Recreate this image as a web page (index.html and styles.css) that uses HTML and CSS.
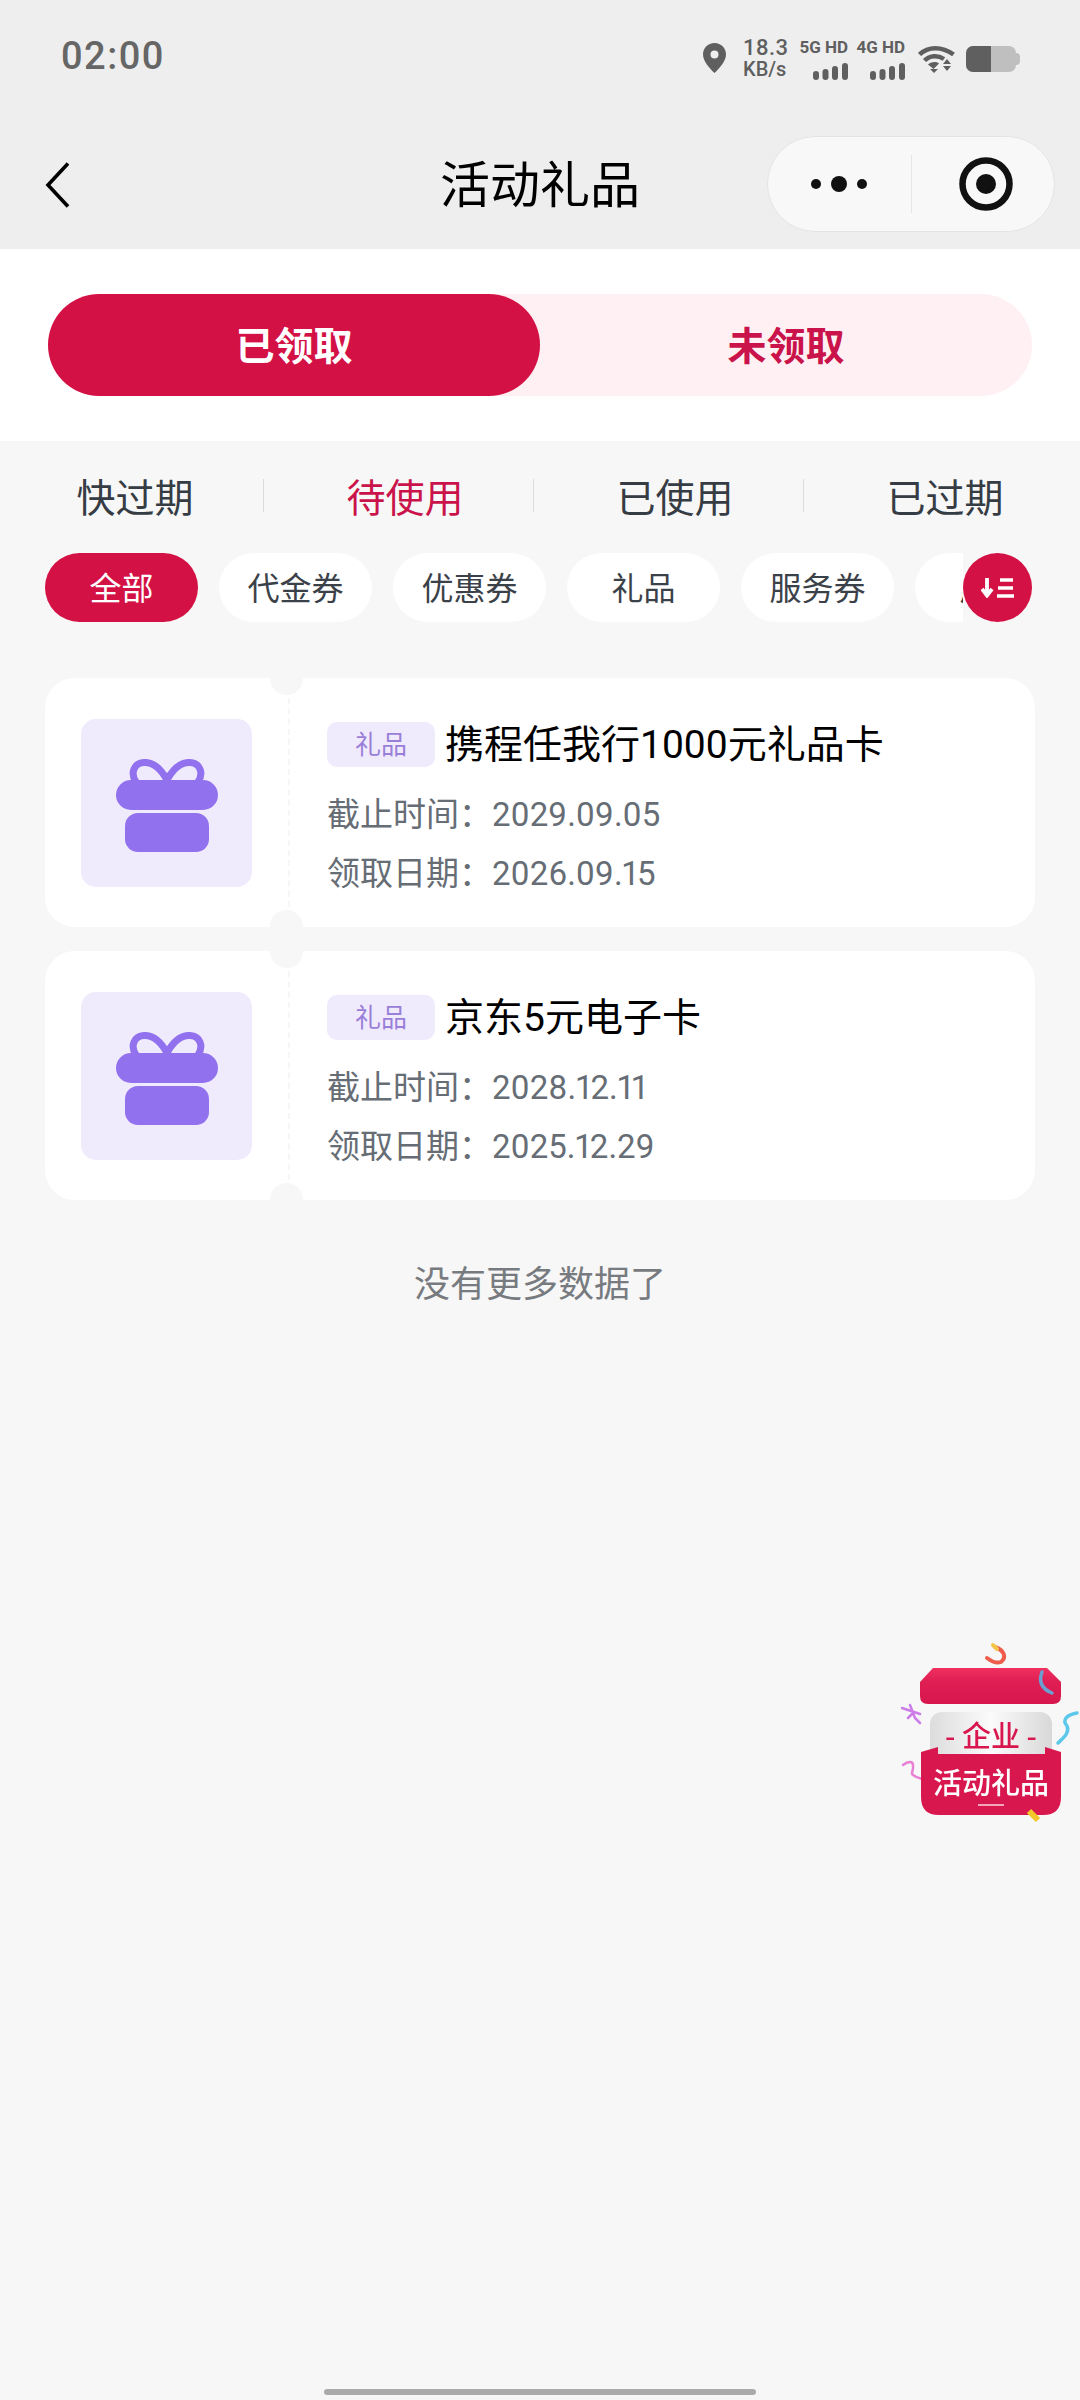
FILE: index.html
```html
<!DOCTYPE html>
<html lang="zh-CN">
<head>
  <meta charset="UTF-8">
  <meta name="viewport" content="width=device-width, initial-scale=1.0">
  <title>活动礼品</title>
  <link rel="stylesheet" href="styles.css">
</head>
<body>
  <!-- Status bar and navigation -->
  <header class="top">
    <div class="status">
      <span class="time">02:00</span>
      <div class="status-icons">
        <svg class="pin" width="23" height="30" viewBox="0 0 23 30"><path fill-rule="evenodd" fill="#5f5f5f" d="M11.5 0C5 0 0 5 0 11.4 0 18 6.500 25 11.500 30 16.500 25 23 18 23 11.400 23 5 18 0 11.500 0zM11.500 7.500a4 4 0 1 1 0 8 4 4 0 0 1 0-8z"/></svg>
        <div class="speed"><span class="speed-num">18.3</span><span class="speed-unit">KB/s</span></div>
        <div class="signal">
          <span class="signal-name">5G HD</span>
          <svg width="35" height="17" viewBox="0 0 35 17"><g fill="#5f5f5f"><rect x="0" y="8" width="6" height="9" rx="3"/><rect x="9.500" y="6" width="6" height="11" rx="3"/><rect x="19" y="3" width="6" height="14" rx="3"/><rect x="29" y="0" width="6" height="17" rx="3"/></g></svg>
        </div>
        <div class="signal">
          <span class="signal-name">4G HD</span>
          <svg width="35" height="17" viewBox="0 0 35 17"><g fill="#5f5f5f"><rect x="0" y="8" width="6" height="9" rx="3"/><rect x="9.500" y="6" width="6" height="11" rx="3"/><rect x="19" y="3" width="6" height="14" rx="3"/><rect x="29" y="0" width="6" height="17" rx="3"/></g></svg>
        </div>
        <svg class="wifi" width="37" height="28" viewBox="0 0 37 28">
          <g fill="none" stroke="#5f5f5f" stroke-width="4.500">
            <path d="M1.500 9.500C10 1 24 1 35.500 9.500"/>
            <path d="M6.500 15.500C12 10 20 10 26 14"/>
          </g>
          <path fill="#5f5f5f" d="M10 19.500c4-3 8-3 11-1l-5.500 5.500zM12 24h8l-4 4zM29 14l4 5h-8zM25 21h8l-4 5z"/>
        </svg>
        <div class="battery"><div class="battery-level"></div></div>
        <i class="battery-nub"></i>
      </div>
    </div>
    <nav class="nav">
      <svg class="back" width="26" height="46" viewBox="0 0 26 46"><path d="M23 1.500 3 23l20 21.500" fill="none" stroke="#000" stroke-width="3.600"/></svg>
      <h1 class="nav-title">活动礼品</h1>
      <div class="capsule">
        <svg class="capsule-more" width="58" height="16" viewBox="0 0 58 16"><circle cx="6" cy="8" r="5" fill="#111"/><circle cx="29" cy="8" r="8" fill="#111"/><circle cx="52" cy="8" r="5" fill="#111"/></svg>
        <i class="capsule-line"></i>
        <svg class="capsule-target" width="54" height="54" viewBox="0 0 54 54"><circle cx="27" cy="27" r="23.500" fill="none" stroke="#111" stroke-width="6.500"/><circle cx="27" cy="27" r="10" fill="#111"/></svg>
      </div>
    </nav>
  </header>

  <!-- Received / not received switch -->
  <section class="switch-wrap">
    <div class="switch">
      <div class="switch-item active">已领取</div>
      <div class="switch-item">未领取</div>
    </div>
  </section>

  <div class="tabs">
    <div class="tab">快过期</div>
    <div class="tab active">待使用</div>
    <div class="tab">已使用</div>
    <div class="tab">已过期</div>
  </div>

  <div class="chips-row">
    <div class="chips">
      <div class="chip active">全部</div>
      <div class="chip">代金券</div>
      <div class="chip">优惠券</div>
      <div class="chip">礼品</div>
      <div class="chip">服务券</div>
      <div class="chip">周边</div>
    </div>
    <div class="sort">
      <svg width="33" height="20" viewBox="0 0 33 20"><path d="M6 0v17M1 11l5 6.500 5-6.500" fill="none" stroke="#fff" stroke-width="3.800"/><path d="M19 2h13M17 10h15M16 18h17" fill="none" stroke="#fff" stroke-width="3.500"/></svg>
    </div>
  </div>

  <!-- Gift cards -->
  <main class="list">
    <article class="card">
      <div class="card-left">
        <div class="gift-box">
          <svg width="102" height="93" viewBox="0 0 102 93"><path d="M51 21C45 10 37 3 28 3.500 18 4 14 14 20 23M51 21C57 10 65 3 74 3.500 84 4 88 14 82 23" fill="none" stroke="#9171ee" stroke-width="7"/><rect x="0" y="21" width="102" height="30" rx="15" fill="#9171ee"/><rect x="9" y="54" width="84" height="39" rx="13" fill="#9171ee"/></svg>
        </div>
      </div>
      <div class="card-body">
        <div class="card-title"><span class="tag">礼品</span><span class="card-name">携程任我行1000元礼品卡</span></div>
        <div class="card-line">截止时间：2029.09.05</div>
        <div class="card-line">领取日期：2026.09.15</div>
      </div>
    </article>
    <article class="card">
      <div class="card-left">
        <div class="gift-box">
          <svg width="102" height="93" viewBox="0 0 102 93"><path d="M51 21C45 10 37 3 28 3.500 18 4 14 14 20 23M51 21C57 10 65 3 74 3.500 84 4 88 14 82 23" fill="none" stroke="#9171ee" stroke-width="7"/><rect x="0" y="21" width="102" height="30" rx="15" fill="#9171ee"/><rect x="9" y="54" width="84" height="39" rx="13" fill="#9171ee"/></svg>
        </div>
      </div>
      <div class="card-body">
        <div class="card-title"><span class="tag">礼品</span><span class="card-name">京东5元电子卡</span></div>
        <div class="card-line">截止时间：2028.12.11</div>
        <div class="card-line">领取日期：2025.12.29</div>
      </div>
    </article>
  </main>

  <p class="no-more">没有更多数据了</p>

  <!-- Floating gift box -->
  <div class="float-gift">
    <svg class="float-art" width="200" height="220" viewBox="0 0 200 220">
      <defs>
        <linearGradient id="paper" x1="0" x2="1" y1="0" y2="0">
          <stop offset="0" stop-color="#dcdcdc"/>
          <stop offset="0.5" stop-color="#fbfbfb"/>
          <stop offset="1" stop-color="#d8d8d8"/>
        </linearGradient>
        <linearGradient id="lid" x1="0" x2="0" y1="0" y2="1">
          <stop offset="0" stop-color="#f0305f"/>
          <stop offset="0.35" stop-color="#e01f55"/>
          <stop offset="1" stop-color="#d6164c"/>
        </linearGradient>
      </defs>
      <g fill="none" stroke-linecap="round">
        <path d="M115 17C124 20 127 27 121 32 116 34 111 31 107 28" stroke="#ee5c4c" stroke-width="4"/>
        <path d="M113 15l4 4" stroke="#f3c64a" stroke-width="4"/>
        <path d="M22 78l18 6M30 75l5 13 5 5M34 82l-6 6" stroke="#cc7de8" stroke-width="2.500"/>
        <path d="M23 135C28 131 33 131 33 135 34 141 30 143 33 145 38 149 42 148 45 150" stroke="#e880d6" stroke-width="2.500"/>
        <path d="M197 83C186 85 182 90 187 96 190 103 183 108 178 113" stroke="#5cc8ea" stroke-width="3.500"/>
      </g>
      <path d="M53 38H167L181 52V66Q181 74 173 74H48Q40 74 40 66V52Z" fill="url(#lid)"/>
      <path d="M162 42C159 50 160 58 172 63" fill="none" stroke="#6a9fd0" stroke-width="3.500" stroke-linecap="round"/>
      <rect x="50" y="82" width="122" height="48" rx="12" fill="url(#paper)"/>
      <path d="M41 122 58 117V124H165V117L181 122V167Q181 185 163 185H59Q41 185 41 167Z" fill="#d8174e"/>
      <path d="M98 175h26" stroke="#f3a6bb" stroke-width="2"/>
      <path d="M149 181l9 9" stroke="#f3c82a" stroke-width="6"/>
    </svg>
    <span class="float-top">- 企业 -</span>
    <span class="float-name">活动礼品</span>
  </div>

  <div class="home-bar"></div>
</body>
</html>
```

FILE: styles.css
```css
/* Reset */
* {
  margin: 0;
  padding: 0;
  box-sizing: border-box;
}

body {
  width: 1080px;
  height: 2400px;
  overflow: hidden;
  position: relative;
  background: #f7f7f7;
  font-family: "Noto Sans CJK SC", "Noto Sans", sans-serif;
}

/* Top area */
.top {
  height: 249px;
  background: #eeeeee;
}

.status {
  height: 110px;
  display: flex;
  justify-content: space-between;
  align-items: flex-start;
  padding: 30px 60px 0 61px;
}

.time {
  margin-top: 1px;
  font-family: Roboto, sans-serif;
  font-weight: 500;
  font-size: 38px;
  line-height: 50px;
  letter-spacing: 1.5px;
  color: #666666;
}

.status-icons {
  display: flex;
  align-items: flex-start;
  color: #5f5f5f;
  font-family: Roboto, sans-serif;
}

.pin {
  margin-top: 13px;
  margin-right: 17px;
}

.speed {
  display: flex;
  flex-direction: column;
  width: 50px;
  margin-top: 7px;
  margin-right: 7px;
}

.speed-num {
  font-size: 22px;
  line-height: 22px;
  font-weight: 500;
  letter-spacing: 0.5px;
}

.speed-unit {
  font-size: 20px;
  line-height: 20px;
  font-weight: 500;
}

.signal {
  width: 48px;
  margin-right: 9px;
  margin-top: 8px;
  display: flex;
  flex-direction: column;
  align-items: flex-end;
}

.signal-name {
  font-size: 17px;
  line-height: 18px;
  font-weight: 700;
  white-space: nowrap;
  margin-bottom: 7px;
}

.wifi {
  margin-top: 15px;
  margin-left: 4px;
}

.battery {
  width: 50px;
  height: 26px;
  margin-top: 16px;
  margin-left: 11px;
  border-radius: 7px;
  background: #bfbfbf;
  overflow: hidden;
}

.battery-level {
  width: 25px;
  height: 100%;
  background: #5f5f5f;
}

.battery-nub {
  width: 4px;
  height: 12px;
  margin-top: 23px;
  border-radius: 0 4px 4px 0;
  background: #bfbfbf;
}

.nav {
  height: 139px;
  position: relative;
  display: flex;
  align-items: flex-start;
  justify-content: space-between;
  padding: 26px 25px 0 45px;
}

.back {
  margin-top: 26px;
}

.nav-title {
  position: absolute;
  left: 0;
  right: 0;
  top: 35px;
  text-align: center;
  font-size: 50px;
  line-height: 72px;
  font-weight: 400;
  color: #000;
}

.capsule {
  width: 288px;
  height: 96px;
  border-radius: 48px;
  background: #f8f8f8;
  border: 1px solid #e4e4e4;
  display: flex;
  align-items: center;
  padding-left: 42px;
}

.capsule-line {
  width: 1px;
  height: 58px;
  margin-left: 43px;
  margin-right: 47px;
  background: #e6e6e6;
}

/* Switch */
.switch-wrap {
  height: 192px;
  background: #fff;
  padding: 45px 48px;
}

.switch {
  display: flex;
  height: 102px;
  border-radius: 51px;
  background: #fff0f3;
}

.switch-item {
  flex: 1;
  height: 102px;
  border-radius: 51px;
  text-align: center;
  font-size: 39px;
  line-height: 98px;
  font-weight: 700;
  color: #c9134a;
}

.switch-item.active {
  background: #d31145;
  color: #fff;
}

/* Tabs */
.tabs {
  display: flex;
  height: 112px;
  align-items: center;
  padding-bottom: 4px;
}

.tab {
  position: relative;
  width: 270px;
  text-align: center;
  font-size: 39px;
  line-height: 40px;
  color: #363c44;
}

/* divider sits a little left of the cell edge */
.tab:not(:last-child)::after {
  content: "";
  position: absolute;
  right: 6px;
  top: 4px;
  width: 1px;
  height: 33px;
  background: #dcdcdc;
}

.tab.active {
  color: #c9134a;
}

/* Chips */
.chips-row {
  position: relative;
  height: 69px;
}

.chips {
  display: flex;
  gap: 21px;
  padding-left: 45px;
  width: 963px;
  overflow: hidden;
}

.chip {
  flex: none;
  width: 153px;
  height: 69px;
  border-radius: 35px;
  background: #fff;
  text-align: center;
  font-size: 32px;
  line-height: 66px;
  color: #3b4148;
}

.chip.active {
  background: #d31145;
  color: #fff;
}

.sort {
  position: absolute;
  right: 48px;
  top: 0;
  width: 69px;
  height: 69px;
  border-radius: 50%;
  background: #d31145;
  display: flex;
  align-items: center;
  justify-content: center;
}

/* Cards */
.list {
  padding: 56px 45px 0;
  display: flex;
  flex-direction: column;
  gap: 24px;
}

.card {
  position: relative;
  display: flex;
  height: 249px;
  border-radius: 30px;
  background: #fff;
}

/* ticket notches */
.card::before,
.card::after {
  content: "";
  position: absolute;
  left: 225px;
  width: 33px;
  height: 33px;
  border-radius: 50%;
  background: #f7f7f7;
}

.card::before {
  top: -16px;
}

.card::after {
  bottom: -16px;
}

.card-left {
  width: 245px;
  padding: 41px 0 0 36px;
  border-right: 2px dashed #f6f6f6;
}

.gift-box {
  width: 171px;
  height: 168px;
  border-radius: 15px;
  background: #f0eafd;
  display: flex;
  align-items: flex-start;
  justify-content: center;
  padding-top: 40px;
}

.card-body {
  padding: 44px 0 0 37px;
}

.card-title {
  display: flex;
  align-items: center;
  height: 45px;
  gap: 10px;
  font-family: Roboto, "Noto Sans CJK SC", sans-serif;
  font-size: 39px;
  color: #000;
  white-space: nowrap;
}

.card-name {
  padding-bottom: 8px;
}

.tag {
  width: 108px;
  height: 45px;
  border-radius: 10px;
  background: #f0eafd;
  text-align: center;
  font-family: "Noto Sans CJK SC", sans-serif;
  font-size: 26px;
  line-height: 42px;
  color: #9a7fd8;
}

.card-line {
  font-family: Roboto, "Noto Sans CJK SC", sans-serif;
  font-size: 33px;
  line-height: 59px;
  font-variant-numeric: proportional-nums;
  color: #666d75;
}

.card-title + .card-line {
  margin-top: 18px;
}

.no-more {
  margin-top: 54px;
  text-align: center;
  font-size: 36px;
  line-height: 54px;
  color: #777b80;
}

/* Floating badge */
.float-gift {
  position: absolute;
  left: 880px;
  top: 1630px;
  width: 200px;
  height: 220px;
  filter: blur(0.5px);
}

.float-art {
  display: block;
}

.float-top {
  position: absolute;
  left: 50px;
  width: 122px;
  top: 84px;
  text-align: center;
  font-size: 29px;
  line-height: 40px;
  font-weight: 500;
  color: #d8174e;
  white-space: nowrap;
}

.float-name {
  position: absolute;
  left: 41px;
  width: 140px;
  top: 130px;
  text-align: center;
  font-size: 29px;
  line-height: 42px;
  font-weight: 500;
  color: #fff;
  white-space: nowrap;
}

.home-bar {
  position: absolute;
  left: 324px;
  top: 2389px;
  width: 432px;
  height: 6px;
  border-radius: 3px;
  background: #ababab;
}
```
